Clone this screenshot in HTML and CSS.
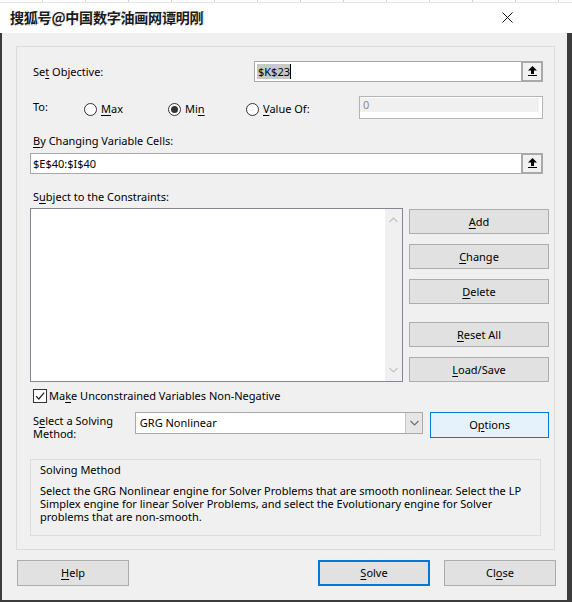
FILE: index.html
```html
<!DOCTYPE html>
<html>
<head>
<meta charset="utf-8">
<link rel="stylesheet" href="styles.css">
</head>
<body>
<div class="window">
  <div class="topstrip"></div>
  <div class="titlebar">
    <span class="title">搜狐号@中国数字油画网谭明刚</span>
    <svg class="closex" width="11" height="11" viewBox="0 0 11 11"><path d="M0.5 0.5 L10.5 10.5 M10.5 0.5 L0.5 10.5" stroke="#111" stroke-width="1" fill="none"/></svg>
  </div>
  <div class="client">
    <div class="frame">
      <div class="row row-obj">
        <span class="lbl">Se<u>t</u> Objective:</span>
        <div class="refbox w-obj">
          <span class="reftext"><span class="sel">$K$23</span><span class="caret"></span></span>
          <span class="refbtn"><svg width="9" height="10" viewBox="0 0 9 10"><path d="M4.5 0 L9 4.5 L6 4.5 L6 8 L3 8 L3 4.5 L0 4.5 Z" fill="#000"/><rect x="0" y="9" width="9" height="1" fill="#000"/></svg></span>
        </div>
      </div>
      <div class="row row-to">
        <span class="lbl to-lbl">To:</span>
        <div class="radio r-max"><span class="circle"></span><span class="rtext"><u>M</u>ax</span></div>
        <div class="radio r-min"><span class="circle on"></span><span class="rtext">Mi<u>n</u></span></div>
        <div class="radio r-val"><span class="circle"></span><span class="rtext"><u>V</u>alue Of:</span></div>
        <div class="valbox"><span class="valfill">0</span></div>
      </div>
      <div class="lbl lbl-by"><u>B</u>y Changing Variable Cells:</div>
      <div class="refbox w-by">
        <span class="reftext">$E$40:$I$40</span>
        <span class="refbtn"><svg width="9" height="10" viewBox="0 0 9 10"><path d="M4.5 0 L9 4.5 L6 4.5 L6 8 L3 8 L3 4.5 L0 4.5 Z" fill="#000"/><rect x="0" y="9" width="9" height="1" fill="#000"/></svg></span>
      </div>
      <div class="lbl lbl-subj">S<u>u</u>bject to the Constraints:</div>
      <div class="row row-cons">
        <div class="list">
          <div class="listbody"></div>
          <div class="vscroll">
            <svg width="9" height="6" viewBox="0 0 9 6"><path d="M0.5 5 L4.5 1 L8.5 5" stroke="#c4c4c4" stroke-width="1.2" fill="none"/></svg>
            <svg width="9" height="6" viewBox="0 0 9 6"><path d="M0.5 1 L4.5 5 L8.5 1" stroke="#c4c4c4" stroke-width="1.2" fill="none"/></svg>
          </div>
        </div>
        <div class="btncol">
          <div class="btn"><u>A</u>dd</div>
          <div class="btn"><u>C</u>hange</div>
          <div class="btn"><u>D</u>elete</div>
          <div class="btn btn-reset"><u>R</u>eset All</div>
          <div class="btn"><u>L</u>oad/Save</div>
        </div>
      </div>
      <div class="row row-check">
        <span class="checkbox"><svg width="12" height="12" viewBox="0 0 12 12"><path d="M2 6.2 L4.8 9 L10.2 2.6" stroke="#222" stroke-width="1.2" fill="none"/></svg></span>
        <span class="cbtext">Ma<u>k</u>e Unconstrained Variables Non-Negative</span>
      </div>
      <div class="row row-method">
        <div class="method-lbl"><span class="ml-line">S<u>e</u>lect a Solving</span><span class="ml-line">Method:</span></div>
        <div class="combo">
          <span class="combotext">GRG Nonlinear</span>
          <span class="combobtn"><svg width="9" height="6" viewBox="0 0 9 6"><path d="M0.5 1 L4.5 5 L8.5 1" stroke="#6d6d6d" stroke-width="1.1" fill="none"/></svg></span>
        </div>
        <div class="btn btn-options">O<u>p</u>tions</div>
      </div>
      <div class="groupbox">
        <div class="gtitle">Solving Method</div>
        <p class="gtext">Select the GRG Nonlinear engine for Solver Problems that are smooth nonlinear. Select the LP Simplex engine for linear Solver Problems, and select the Evolutionary engine for Solver problems that are non-smooth.</p>
      </div>
    </div>
    <div class="footer">
      <div class="btn fbtn"><u>H</u>elp</div>
      <div class="spacer"></div>
      <div class="btn fbtn btn-default"><u>S</u>olve</div>
      <div class="btn fbtn btn-close">Cl<u>o</u>se</div>
    </div>
  </div>
</div>
</body>
</html>
```

FILE: styles.css
```css
* { box-sizing: border-box; }
html, body { margin: 0; padding: 0; }
body {
  width: 572px;
  height: 602px;
  overflow: hidden;
  background: #f0f0f0;
  font-family: "Noto Sans", "Segoe UI", sans-serif;
  font-size: 11px;
  color: #000;
}
u { text-decoration: underline; text-underline-offset: 2px; text-decoration-thickness: 1px; }
.window { width: 572px; height: 602px; display: flex; flex-direction: column; }
.topstrip {
  height: 3px;
  background: #ffffff repeating-linear-gradient(90deg, transparent 0 42px, #d4d4d4 42px 43px);
  border-bottom: 1px solid #e4e4e4;
}
.titlebar {
  height: 30px;
  background: #fff;
  display: flex;
  align-items: center;
  padding-left: 10px;
  position: relative;
}
.title {
  font-family: "Noto Sans CJK SC", "Noto Sans", sans-serif;
  font-size: 14px;
  font-weight: 700;
  color: #1a1a1a;
  letter-spacing: -0.2px;
  text-shadow: 1px 1px 0 #fff, -1px -1px 0 #fff, 1px 0 0 #888, 0 1px 0 #999;
  line-height: 18px;
  margin-top: -2px;
}
.closex { position: absolute; left: 502px; top: 9px; }
.client {
  height: 569px;
  border-left: 2px solid #3c3c3c;
  border-right: 5px solid #3c3c3c;
  border-bottom: 2px solid #3c3c3c;
  background: #f0f0f0;
  display: flex;
  flex-direction: column;
}
.frame {
  margin: 13px 0 0 14px;
  width: 539px;
  height: 504px;
  border: 1px solid #dcdcdc;
  padding: 14px 5px 0 13px;
  display: flex;
  flex-direction: column;
}
.row { display: flex; }
.lbl { line-height: 16px; padding-left: 3px; white-space: nowrap; }
.row-obj { height: 21px; align-items: center; }
.refbox {
  height: 21px;
  border: 1px solid #a9a9a9;
  background: #fff;
  display: flex;
  align-items: center;
  justify-content: space-between;
}
.w-obj { width: 289px; margin-left: auto; margin-right: 6px; }
.w-by { width: 513px; margin-top: 4px; }
.reftext { padding-left: 2px; line-height: 16px; display: flex; align-items: center; }
.sel { background: #c8c8c8; color: #000; padding: 0 0 0 1px; line-height: 15px; }
.caret { display: inline-block; width: 1px; height: 15px; background: #000; }
.refbtn {
  width: 22px;
  height: 21px;
  margin: -1px -1px -1px 0;
  border: 2px solid #a9a9a9;
  background: #f1f1f1;
  display: flex;
  align-items: center;
  justify-content: center;
  padding-bottom: 1px;
}
.row-to { height: 22px; margin-top: 14px; align-items: flex-start; }
.to-lbl { width: 54px; padding-top: 3px; }
.radio { display: flex; align-items: center; height: 16px; margin-top: 5px; }
.r-max { width: 84px; }
.r-min { width: 78px; }
.r-val { width: 113px; }
.circle {
  width: 13px; height: 13px;
  border: 1px solid #333;
  border-radius: 50%;
  background: #fff;
  display: flex; align-items: center; justify-content: center;
}
.circle.on::after {
  content: "";
  width: 7px; height: 7px;
  border-radius: 50%;
  background: #333;
}
.rtext { margin-left: 4px; line-height: 16px; }
.valbox {
  width: 184px;
  height: 23px;
  border: 1px solid #b4b4b4;
  background: #fff;
  padding: 1px 3px 0 0;
}
.valfill {
  display: block;
  height: 14px;
  background: #f0f0f0;
  color: #8c8c8c;
  line-height: 14px;
  padding-left: 3px;
}
.lbl-by { margin-top: 15px; }
.lbl-subj { margin-top: 15px; }
.row-cons { margin-top: 3px; align-items: flex-start; height: 174px; }
.list {
  width: 373px;
  height: 174px;
  border: 1px solid #828790;
  background: #fff;
  display: flex;
}
.listbody { flex: 1; }
.vscroll {
  width: 17px;
  background: #f0f0f0;
  display: flex;
  flex-direction: column;
  justify-content: space-between;
  align-items: center;
  padding: 8px 0 8px;
}
.btncol { margin-left: 6px; margin-top: 1px; display: flex; flex-direction: column; gap: 10px; }
.btn {
  width: 140px;
  height: 26px;
  background: #e1e1e1;
  border: 1px solid #adadad;
  display: flex;
  align-items: center;
  justify-content: center;
  line-height: 16px;
}
.btncol .btn { height: 25px; }
.btn-reset { margin-top: 8px; }
.row-check { margin-top: 7px; height: 14px; align-items: center; }
.checkbox {
  width: 14px; height: 14px;
  margin-left: 3px;
  border: 1px solid #333;
  background: #fff;
  display: flex; align-items: center; justify-content: center;
}
.cbtext { margin-left: 2px; line-height: 16px; }
.row-method { margin-top: 9px; height: 26px; align-items: flex-start; }
.method-lbl { width: 105px; padding-left: 3px; padding-top: 2px; display: flex; flex-direction: column; }
.ml-line { display: block; height: 13px; line-height: 13px; white-space: nowrap; }
.combo {
  width: 289px;
  height: 22px;
  border: 1px solid #a9a9a9;
  background: #fff;
  display: flex;
  align-items: center;
  justify-content: space-between;
}
.combotext { padding-left: 4px; line-height: 16px; }
.combobtn {
  width: 17px;
  height: 20px;
  background: #e6e6e6;
  border-left: 1px solid #c4c4c4;
  display: flex; align-items: center; justify-content: center;
}
.btn-options {
  width: 119px;
  margin-left: 7px;
  background: #e5f1fb;
  border-color: #0078d7;
}
.groupbox {
  margin-top: 21px;
  width: 511px;
  height: 77px;
  border: 1px solid #dcdcdc;
  padding: 2px 9px 0 9px;
}
.gtitle { line-height: 16px; }
.gtext { margin: 6px 0 0; line-height: 13px; }
.footer {
  display: flex;
  padding: 10px 11px 0 15px;
}
.fbtn { width: 112px; }
.spacer { flex: 1; }
.btn-default { border: 2px solid #0078d7; }
.btn-close { margin-left: 14px; }
```
